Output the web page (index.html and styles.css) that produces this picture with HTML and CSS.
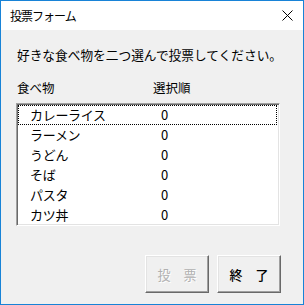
FILE: index.html
```html
<!DOCTYPE html>
<html lang="ja">
<head>
<meta charset="utf-8">
<link rel="stylesheet" href="styles.css">
</head>
<body>
<div class="window">
  <div class="titlebar">
    <span class="title">投票フォーム</span>
    <svg class="close" width="11" height="11" viewBox="0 0 11 11"><path d="M0.5 0.5 L10.5 10.5 M10.5 0.5 L0.5 10.5" stroke="#000" stroke-width="1" fill="none"/></svg>
  </div>
  <div class="client">
    <div class="prompt">好きな食べ物を二つ選んで投票してください。</div>
    <div class="header"><span class="col-name">食べ物</span><span>選択順</span></div>
    <div class="listbox">
      <div class="row focus"><span class="col-name">カレーライス</span><span>0</span></div>
      <div class="row"><span class="col-name">ラーメン</span><span>0</span></div>
      <div class="row"><span class="col-name">うどん</span><span>0</span></div>
      <div class="row"><span class="col-name">そば</span><span>0</span></div>
      <div class="row"><span class="col-name">パスタ</span><span>0</span></div>
      <div class="row"><span class="col-name">カツ丼</span><span>0</span></div>
    </div>
    <div class="buttons">
      <button class="btn disabled">投　票</button>
      <button class="btn">終　了</button>
    </div>
  </div>
</div>
</body>
</html>
```
FILE: styles.css
```css
html, body {
  margin: 0;
  padding: 0;
  background: #f0f0f0;
}
.window {
  width: 304px;
  height: 305px;
  box-sizing: border-box;
  border: 1px solid #1883d7;
  display: flex;
  flex-direction: column;
  font-family: "Noto Sans CJK JP", "Noto Sans", sans-serif;
  color: #000;
}
.titlebar {
  height: 29px;
  background: #fff;
  display: flex;
  align-items: center;
  justify-content: space-between;
  padding: 0 10px 0 9px;
  flex: none;
}
.title {
  font-size: 12px;
  line-height: 16px;
  letter-spacing: -1px;
}
.close {
  display: block;
}
.client {
  flex: 1;
  background: #f0f0f0;
  padding: 0 22px 0 16px;
  display: flex;
  flex-direction: column;
}
.prompt {
  margin-top: 17px;
  font-size: 12.7px;
  line-height: 16px;
  white-space: nowrap;
}
.header {
  margin-top: 17px;
  font-size: 12.5px;
  line-height: 16px;
  display: flex;
}
.header .col-name {
  width: 136px;
}
.listbox {
  margin-top: 7px;
  margin-left: -1px;
  width: 264px;
  height: 123px;
  box-sizing: border-box;
  background: #fff;
  border: 1px solid;
  border-color: #a0a0a0 #ffffff #ffffff #a0a0a0;
  box-shadow: inset 1px 1px #696969, inset -1px -1px #e3e3e3;
  padding: 1px 2px 1px 1px;
}
.row {
  height: 20px;
  box-sizing: border-box;
  display: flex;
  align-items: center;
  padding-left: 11px;
  font-size: 13px;
  line-height: 16px;
  border: 1px solid transparent;
}
.row.focus {
  border: 1px dotted #000;
}
.row .col-name {
  width: 131px;
  letter-spacing: -0.3px;
}
.buttons {
  margin-top: 29px;
  display: flex;
  justify-content: flex-end;
  gap: 8px;
}
.btn {
  width: 64px;
  height: 38px;
  box-sizing: border-box;
  background: #f0f0f0;
  border: 1px solid;
  border-color: #ffffff #696969 #696969 #ffffff;
  box-shadow: inset -1px -1px #a0a0a0, inset 1px 1px #e3e3e3;
  font-family: "Noto Sans CJK JP", sans-serif;
  font-size: 13px;
  font-weight: 500;
  color: #000;
  padding: 0;
}
.btn.disabled {
  color: #b0b0b0;
  font-weight: normal;
  text-shadow: 1px 1px #fff;
}
```
